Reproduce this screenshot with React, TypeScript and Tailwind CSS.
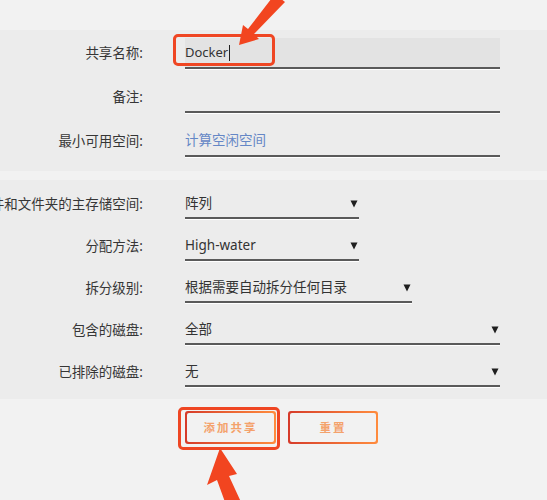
import React from "react";

type SelectRow = {
    label: string;
    value: string;
    width: string;
};

const selects: SelectRow[] = [
    { label: "新文件和文件夹的主存储空间:", value: "阵列", width: "w-[174px]" },
    { label: "分配方法:", value: "High-water", width: "w-[174px]" },
    { label: "拆分级别:", value: "根据需要自动拆分任何目录", width: "w-[227px]" },
    { label: "包含的磁盘:", value: "全部", width: "w-[315px]" },
    { label: "已排除的磁盘:", value: "无", width: "w-[315px]" },
];

const Caret = () => (
    <svg width="8" height="9" viewBox="0 0 8 9" className="shrink-0">
        <path d="M0.5 1.5 H7.5 L4 8.5 Z" fill="#1f1f1f" />
    </svg>
);

const Label = ({ text }: { text: string }) => (
    <div className="w-[143px] shrink-0 flex justify-end">
        <span className="whitespace-nowrap text-[13.5px] text-[#363636]">{text}</span>
    </div>
);

const App = () => {
    return (
        <div className="relative w-full h-[500px] overflow-hidden bg-[#f2f2f2] font-['Noto_Sans','Noto_Sans_CJK_SC',sans-serif]">
            <div className="h-[30px]" />

            {/* share name section */}
            <section className="bg-[#ececec] pt-[8px] pb-[14px] flex flex-col gap-[13px]">
                <div className="flex items-center">
                    <Label text="共享名称:" />
                    <div className="relative ml-[42px] w-[315px] h-[31px] bg-[#e3e3e3] border-b-2 border-[#5a5a5a] shadow-[0_1px_0_#ffffff] flex items-center">
                        <span className="text-[13px] text-[#333]">Docker</span>
                        <span className="w-px h-[16px] bg-[#222] ml-px" />
                        <div className="absolute left-[-12px] top-[-4px] w-[102px] h-[32px] border-[3px] border-[#ef4623] rounded-[5px]" />
                    </div>
                </div>
                <div className="flex items-center">
                    <Label text="备注:" />
                    <div className="ml-[42px] w-[315px] h-[31px] border-b-2 border-[#5a5a5a] shadow-[0_1px_0_#ffffff]" />
                </div>
                <div className="flex items-center">
                    <Label text="最小可用空间:" />
                    <div className="ml-[42px] w-[315px] h-[31px] border-b-2 border-[#5a5a5a] shadow-[0_1px_0_#ffffff] flex items-center">
                        <span className="text-[13.5px] text-[#6587c6]">计算空闲空间</span>
                    </div>
                </div>
            </section>

            <div className="h-[9px]" />

            {/* storage section */}
            <section className="bg-[#ececec] pt-[10px] pb-[12px] flex flex-col gap-[13px]">
                {selects.map((s) => (
                    <div key={s.label} className="flex items-center">
                        <Label text={s.label} />
                        <div className={`ml-[42px] ${s.width} h-[29px] border-b-2 border-[#5a5a5a] shadow-[0_1px_0_#ffffff] flex items-center justify-between pr-[1px]`}>
                            <span className="text-[13.5px] text-[#333]">{s.value}</span>
                            <Caret />
                        </div>
                    </div>
                ))}
            </section>

            {/* buttons */}
            <div className="flex items-center mt-[12px]">
                <div className="w-[143px] shrink-0" />
                <div className="ml-[42px] flex gap-[12px]">
                    <div className="relative">
                        <div className="w-[91px] h-[33px] rounded-[3px] p-[2px] bg-linear-to-r from-[#d63a2a] to-[#ff8c3e]">
                            <div className="w-full h-full rounded-[2px] bg-[#f2f2f2] flex items-center justify-center">
                                <span className="text-[11.5px] font-bold tracking-[2px] text-[#f4a26c]">添加共享</span>
                            </div>
                        </div>
                        <div className="absolute left-[-7px] top-[-4px] w-[102px] h-[43px] border-[3px] border-[#ef4623] rounded-[5px]" />
                    </div>
                    <div className="w-[90px] h-[33px] rounded-[3px] p-[2px] bg-linear-to-r from-[#d63a2a] to-[#ff8c3e]">
                        <div className="w-full h-full rounded-[2px] bg-[#f2f2f2] flex items-center justify-center">
                            <span className="text-[11.5px] font-bold tracking-[2px] text-[#f4a26c]">重置</span>
                        </div>
                    </div>
                </div>
            </div>

            {/* annotation arrows */}
            <svg className="absolute inset-0 pointer-events-none" width="547" height="500" viewBox="0 0 547 500">
                <polygon
                    points="239,45 243,25 248,29 275,-6 285,2 254,34 259,39"
                    fill="#f24520"
                />
                <polygon
                    points="220,448 237,474 229,476 241,502 225,502 217,480 207,485"
                    fill="#f24520"
                />
            </svg>
        </div>
    );
};

export default App;
